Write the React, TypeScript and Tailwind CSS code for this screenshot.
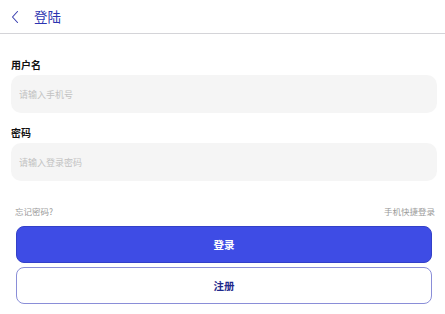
import React, { useState } from 'react';

const font = { fontFamily: '"Noto Sans CJK SC", "Noto Sans", sans-serif' };

export default function App() {
  const [phone, setPhone] = useState('');
  const [password, setPassword] = useState('');

  return (
    <div className="w-[445px] h-[314px] bg-white overflow-hidden" style={font}>
      <div className="h-[34px] flex items-center border-b border-[#d4d4d8]">
        <button className="ml-[10px] w-[10px] h-[14px] flex items-center justify-center text-[#3a3fb0]">
          <svg width="8" height="14" viewBox="0 0 8 14" fill="none">
            <path d="M6.5 1.5L1.5 7L6.5 12.5" stroke="currentColor" strokeWidth="1.1" strokeLinecap="round" strokeLinejoin="round" />
          </svg>
        </button>
        <h1 className="ml-[14px] text-[13.5px] leading-none text-[#2c34b0]">登陆</h1>
      </div>

      <div className="pl-[11px] pr-[8px]">
        <label className="block mt-[26px] text-[10px] font-bold leading-none text-[#111]">用户名</label>
        <input
          value={phone}
          onChange={(e) => setPhone(e.target.value)}
          placeholder="请输入手机号"
          className="mt-[5px] w-full h-[38px] rounded-[10px] bg-[#f5f5f5] px-[8px] text-[9px] outline-none placeholder:text-[#c2c2c2]"
          style={font}
        />
        <label className="block mt-[15px] text-[10px] font-bold leading-none text-[#111]">密码</label>
        <input
          type="text"
          value={password}
          onChange={(e) => setPassword(e.target.value)}
          placeholder="请输入登录密码"
          className="mt-[5px] w-full h-[38px] rounded-[10px] bg-[#f5f5f5] px-[8px] text-[9px] outline-none placeholder:text-[#c2c2c2]"
          style={font}
        />
      </div>

      <div className="mt-[26px] pl-[15px] pr-[10px] flex justify-between text-[8.5px] leading-[9px] text-[#9a9a9a]">
        <span>忘记密码?</span>
        <span>手机快捷登录</span>
      </div>

      <div className="pl-[16px] pr-[13px] mt-[10px] flex flex-col gap-[4px]">
        <button className="h-[37px] rounded-[8px] bg-[#3e4ce5] border border-[#3340c8] text-white text-[10.5px] font-bold" style={font}>
          登录
        </button>
        <button className="h-[37px] rounded-[8px] bg-white border border-[#8a8ed8] text-[#1f2a8c] text-[10.5px] font-bold" style={font}>
          注册
        </button>
      </div>
    </div>
  );
}
